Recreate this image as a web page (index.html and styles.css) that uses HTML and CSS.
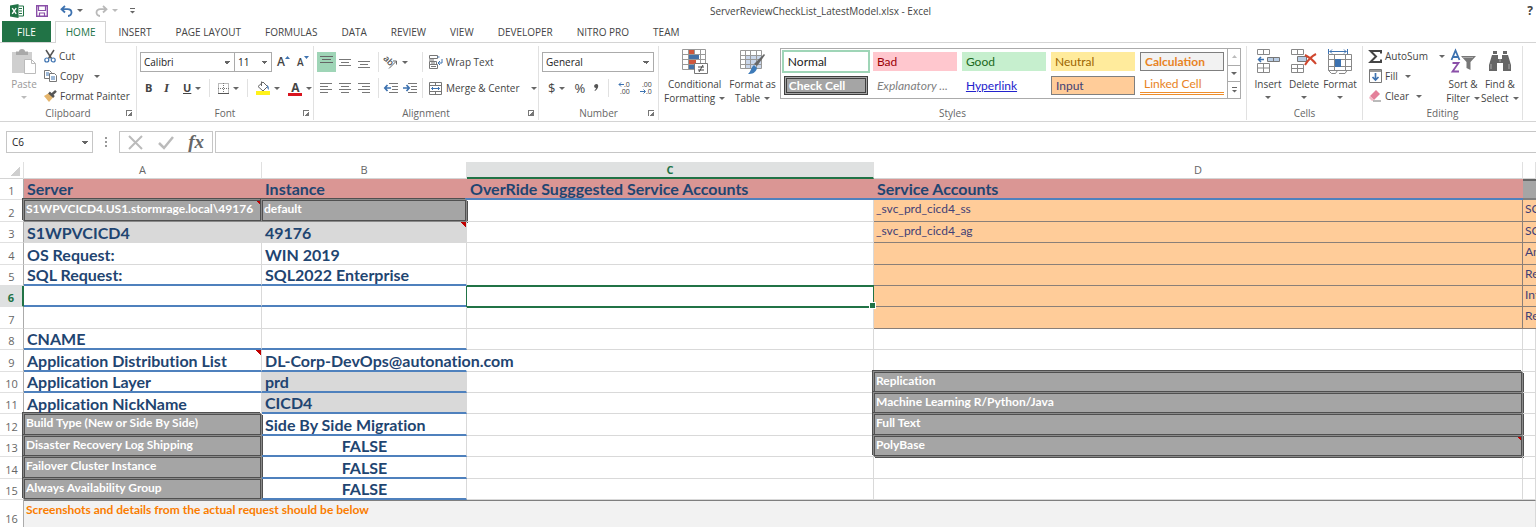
FILE: index.html
```html
<!DOCTYPE html>
<html lang="en">
<head>
  <meta charset="UTF-8">
  <meta name="viewport" content="width=device-width, initial-scale=1.0">
  <title>ServerReviewCheckList_LatestModel.xlsx - Excel</title>
  <link rel="stylesheet" href="styles.css">
</head>
<body>

  <header class="titlebar">
    <div class="quick">
      <svg width="14" height="14" viewBox="0 0 14 14"><path d="M7 2h6.500v10H7z" fill="#fff" stroke="#217346"/><path d="M9 4.500h3M9 7h3M9 9.500h3" stroke="#217346"/><path d="M0 1.500L8.500 0v14L0 12.500z" fill="#217346"/><path d="M2.200 4.200l4 5.600M6.200 4.200l-4 5.600" stroke="#fff" stroke-width="1.400"/></svg>
      <button aria-label="Save"><svg width="12" height="12" viewBox="0 0 12 12"><path d="M.7.700h10.600v10.600H.7z" fill="#fff" stroke="#8a4fa8" stroke-width="1.400"/><path d="M2.500 1v4.500h7V1M3.500 11V8h5v3" fill="none" stroke="#8a4fa8" stroke-width="1.200"/></svg></button>
      <button aria-label="Undo"><svg width="13" height="12" viewBox="0 0 13 12"><path d="M5 1L1.500 4.200 5 7.500M2 4.200h5.500c5.500 0 5 6.800.5 6.800" fill="none" stroke="#3d72b0" stroke-width="1.800"/></svg><i class="caret"></i></button>
      <button aria-label="Redo"><svg width="13" height="12" viewBox="0 0 13 12"><path d="M8 1l3.500 3.200L8 7.500M11 4.200H5.500C0 4.200.5 11 5 11" fill="none" stroke="#b9b9b9" stroke-width="1.800"/></svg><i class="caret pale"></i></button>
      <button aria-label="Customize toolbar"><svg width="5" height="6" viewBox="0 0 5 6"><path d="M0 .5h5" stroke="#666"/><path d="M0 3h5L2.500 5.500z" fill="#666"/></svg></button>
    </div>
    <h1 class="doc-title">ServerReviewCheckList_LatestModel.xlsx - Excel</h1>
    <button class="help" aria-label="Help">?</button>
  </header>

  <nav class="tabs">
    <a class="file" href="#file">FILE</a>
    <a class="active" href="#home">HOME</a>
    <a href="#insert">INSERT</a>
    <a href="#page-layout">PAGE LAYOUT</a>
    <a href="#formulas">FORMULAS</a>
    <a href="#data">DATA</a>
    <a href="#review">REVIEW</a>
    <a href="#view">VIEW</a>
    <a href="#developer">DEVELOPER</a>
    <a href="#nitro">NITRO PRO</a>
    <a href="#team">TEAM</a>
  </nav>

  <div class="ribbon">
    <section class="group clipboard">
      <div class="tools">
        <button class="big disabled">
          <svg width="26" height="26" viewBox="0 0 26 26"><path d="M1 3h20v21H1z" fill="#cfcfcf"/><path d="M5 2.500h3a3 2.500 0 0 1 6 0h3V6H5z" fill="#a9a9a9"/><path d="M13.500 10.500h7l4 4v10h-11z" fill="#fff" stroke="#bbb"/><path d="M20.500 10.500v4h4" fill="none" stroke="#bbb"/></svg>
          <span>Paste</span><i class="caret pale"></i>
        </button>
        <div class="stack">
          <button><svg width="12" height="13" viewBox="0 0 12 13"><path d="M2 0l5.500 8.500M10 0L4.500 8.500" stroke="#555" stroke-width="1.500"/><circle cx="2.800" cy="10" r="2" fill="none" stroke="#3d72b0" stroke-width="1.200"/><circle cx="9.200" cy="10" r="2" fill="none" stroke="#3d72b0" stroke-width="1.200"/></svg>Cut</button>
          <button><svg width="13" height="12" viewBox="0 0 13 12"><path d="M.5.500h5l2 2v6h-7z" fill="#fff" stroke="#777"/><path d="M5.500 3.500h5l2 2v6h-7z" fill="#fff" stroke="#777"/><path d="M2 3h3M2 5h3M7 7h4M7 9h4" stroke="#3d72b0"/></svg>Copy<i class="caret far"></i></button>
          <button><svg width="13" height="12" viewBox="0 0 13 12"><path d="M0 6l5-3 4 4.500L5 12z" fill="#e5b56c"/><path d="M5 2.500L10 7" stroke="#555" stroke-width="2.500"/><path d="M8 4.500L12 .8" stroke="#555" stroke-width="2.500"/></svg>Format Painter</button>
        </div>
      </div>
      <footer>Clipboard<button class="launch" aria-label="Clipboard options"></button></footer>
    </section>

    <section class="group font">
      <div class="tools rows">
        <div class="line">
          <div class="combo">
            <select class="box face" aria-label="Font"><option>Calibri</option></select>
            <select class="box size" aria-label="Font size"><option>11</option></select>
          </div>
          <button class="letter" aria-label="Increase font size">A<svg width="5" height="12" viewBox="0 0 5 12"><path d="M0 3h5L2.500 0z" fill="#3d72b0"/></svg></button>
          <button class="letter small" aria-label="Decrease font size">A<svg width="5" height="12" viewBox="0 0 5 12"><path d="M0 0h5L2.500 3z" fill="#3d72b0"/></svg></button>
        </div>
        <div class="line marks">
          <button class="b">B</button>
          <button class="i">I</button>
          <button class="u"><u>U</u><i class="caret"></i></button>
          <span class="rule"></span>
          <button aria-label="Borders"><svg width="11" height="11" viewBox="0 0 11 11"><path d="M.5.500h10v10H.5zM5.500 0v11M0 5.500h11" fill="none" stroke="#777" stroke-dasharray="1 1"/><path d="M0 10.500h11" stroke="#555"/></svg><i class="caret"></i></button>
          <span class="rule"></span>
          <button aria-label="Fill color"><svg width="14" height="14" viewBox="0 0 14 14"><path d="M2 5.500L7 1l4.500 4.500L7 10z" fill="#fff" stroke="#666"/><path d="M5.500 5V.5" stroke="#666"/><path d="M11 4c2 1 2 3 1.500 5-1-1-1.500-3-1.500-5z" fill="#3d72b0"/><path d="M0 10h14v4H0z" fill="#fff21a"/></svg><i class="caret"></i></button>
          <button aria-label="Font color" class="color"><span>A</span><i class="caret"></i></button>
        </div>
      </div>
      <footer>Font<button class="launch" aria-label="Font options"></button></footer>
    </section>

    <section class="group align">
      <div class="tools">
        <div class="rows aligns">
          <div class="line">
            <button class="on" aria-label="Top align"><svg width="13" height="12" viewBox="0 0 13 12"><path d="M0 .5h13M2 3.500h9M0 6.500h13" stroke="#666"/></svg></button>
            <button aria-label="Middle align"><svg width="13" height="12" viewBox="0 0 13 12"><path d="M0 3.500h12M2 6.500h8M0 9.500h12" stroke="#777"/></svg></button>
            <button aria-label="Bottom align"><svg width="13" height="12" viewBox="0 0 13 12"><path d="M0 5.500h12M2 8.500h8M0 11.500h12" stroke="#777"/></svg></button>
          </div>
          <div class="line">
            <button aria-label="Align left"><svg width="13" height="12" viewBox="0 0 13 12"><path d="M0 1.500h12M0 4.500h8M0 7.500h12M0 10.500h8" stroke="#777"/></svg></button>
            <button aria-label="Center"><svg width="13" height="12" viewBox="0 0 13 12"><path d="M0 1.500h12M2 4.500h8M0 7.500h12M2 10.500h8" stroke="#777"/></svg></button>
            <button aria-label="Align right"><svg width="13" height="12" viewBox="0 0 13 12"><path d="M0 1.500h12M4 4.500h8M0 7.500h12M4 10.500h8" stroke="#777"/></svg></button>
          </div>
        </div>
        <div class="rows indents">
          <div class="line">
            <button aria-label="Orientation"><svg width="14" height="13" viewBox="0 0 14 13"><g transform="rotate(45 5 5)"><text x="-1" y="8" font-size="9" font-weight="600" fill="#555">ab</text></g><path d="M5 12.500L12 5.500M9 5h3.500v3.500" fill="none" stroke="#666"/></svg><i class="caret"></i></button>
          </div>
          <div class="line">
            <button aria-label="Decrease indent"><svg width="14" height="11" viewBox="0 0 14 11"><path d="M5 .5h9M8 3.500h6M8 6.500h6M5 9.500h9" stroke="#777"/><path d="M7 5H1M3.500 2L.8 5l2.700 3" fill="none" stroke="#3d72b0" stroke-width="1.700"/></svg></button>
            <button aria-label="Increase indent"><svg width="14" height="11" viewBox="0 0 14 11"><path d="M5 .5h9M8 3.500h6M8 6.500h6M5 9.500h9" stroke="#777"/><path d="M0 5h6M3.500 2l2.700 3-2.700 3" fill="none" stroke="#3d72b0" stroke-width="1.700"/></svg></button>
          </div>
        </div>
        <div class="rows merges">
          <div class="line"><button><svg width="14" height="14" viewBox="0 0 14 14"><path d="M.5.500h8v3h-8zM.5 6.500h7v3h-7zM.5 9.500h8v4h-8zM0 5h5M2 8h4M2 11.500h5" fill="none" stroke="#777"/><path d="M8.500 2h2M13 4v4H9M11 6L9 8l2 2" fill="none" stroke="#3d72b0"/></svg>Wrap Text</button></div>
          <div class="line"><button><svg width="14" height="13" viewBox="0 0 14 13"><path d="M.5.500h12v12H.5zM.5 3.500h12M.5 9.500h12M6.500 0v3.500M6.500 9.500v3" fill="none" stroke="#777"/><path d="M2.500 6.500h8M4 5L2.500 6.500 4 8M9 5l1.500 1.500L9 8" fill="none" stroke="#3d72b0"/></svg>Merge &amp; Center<i class="caret far"></i></button></div>
        </div>
      </div>
      <footer>Alignment<button class="launch" aria-label="Alignment options"></button></footer>
    </section>

    <section class="group number">
      <div class="tools rows">
        <div class="line"><select class="box format" aria-label="Number format"><option>General</option></select></div>
        <div class="line signs">
          <button class="sign">$<i class="caret"></i></button>
          <button class="sign">%</button>
          <button class="sign" aria-label="Comma style"><svg width="5" height="8" viewBox="0 0 5 8"><path d="M2.500 0C5 0 5 4.500 1 7L.5 6.300C2 5 2 4 2 4-.5 4-.5 0 2.500 0z" fill="#555"/></svg></button>
          <span class="rule"></span>
          <button aria-label="Increase decimal"><svg width="13" height="12" viewBox="0 0 13 12"><text x="6" y="5" font-size="7" fill="#444">.0</text><text x="2" y="12" font-size="7" fill="#444">.00</text><path d="M6 2.500H1M3 .5L1 2.500l2 2" fill="none" stroke="#3d72b0"/></svg></button>
          <button aria-label="Decrease decimal"><svg width="13" height="12" viewBox="0 0 13 12"><text x="2" y="5" font-size="7" fill="#444">.00</text><text x="6" y="12" font-size="7" fill="#444">.0</text><path d="M0 9.500h5M3.500 7.500l2 2-2 2" fill="none" stroke="#3d72b0"/></svg></button>
        </div>
      </div>
      <footer>Number<button class="launch" aria-label="Number options"></button></footer>
    </section>

    <section class="group styles">
      <div class="tools">
        <button class="big">
          <svg width="26" height="26" viewBox="0 0 26 26"><path d="M.5.500h23v20H.5zM6.500 0v20M12.500 0v20M18.500 0v20M0 5.500h23M0 10.500h23M0 15.500h23" fill="none" stroke="#999"/><path d="M7 1h5v4H7zM7 11h7v4H7z" fill="#d0573c"/><path d="M7 6h10v4H7zM7 16h5v4H7z" fill="#4472a8"/><path d="M12.500 14.500h13v10h-13z" fill="#fff" stroke="#777"/><path d="M16 18h6M16 21h6M21 16l-4 7" stroke="#444"/></svg>
          <span>Conditional</span><span>Formatting<i class="caret"></i></span>
        </button>
        <button class="big">
          <svg width="26" height="26" viewBox="0 0 26 26"><path d="M6 6h15v13H6z" fill="#c9d6ea"/><path d="M.5 1.500h21v18H.5zM5.500 1v18M10.500 1v18M16.500 1v18M0 6.500h21M0 10.500h21M0 15.500h21" fill="none" stroke="#999"/><path d="M25 6l-8 11-3-2L24 5z" fill="#666"/><path d="M14 16l3 3c-1 5-5 6-9 6 3-2 3-7 6-9z" fill="#3d7ab8"/></svg>
          <span>Format as</span><span>Table<i class="caret"></i></span>
        </button>
        <div class="gallery">
          <div class="swatches">
            <button class="sw normal">Normal</button>
            <button class="sw bad">Bad</button>
            <button class="sw good">Good</button>
            <button class="sw neutral">Neutral</button>
            <button class="sw calc">Calculation</button>
            <button class="sw checked">Check Cell</button>
            <button class="sw expl">Explanatory ...</button>
            <button class="sw hyper">Hyperlink</button>
            <button class="sw input">Input</button>
            <button class="sw linked">Linked Cell</button>
          </div>
          <div class="scroll">
            <button aria-label="Previous styles"><svg width="5" height="3" viewBox="0 0 5 3"><path d="M0 3h5L2.500 0z" fill="#bbb"/></svg></button>
            <button aria-label="Next styles"><i class="caret"></i></button>
            <button aria-label="More styles"><svg width="5" height="6" viewBox="0 0 5 6"><path d="M0 .5h5" stroke="#666"/><path d="M0 3h5L2.500 5.500z" fill="#666"/></svg></button>
          </div>
        </div>
      </div>
      <footer>Styles</footer>
    </section>

    <section class="group cells">
      <div class="tools">
        <button class="big">
          <svg width="24" height="26" viewBox="0 0 24 26"><path d="M1.500.500h12v5h-12zM7.500.500v5M1.500 14.500h12v9h-12zM7.500 14.500v9M1.500 19h12" fill="none" stroke="#888"/><path d="M11.500 8.500h12v4h-12zM17.500 8.500v4" fill="#b8cce4" stroke="#777"/><path d="M8 10.500H2.500M5 8l-2.500 2.500L5 13" fill="none" stroke="#3d72b0" stroke-width="1.500"/></svg>
          <span>Insert</span><i class="caret"></i>
        </button>
        <button class="big">
          <svg width="26" height="26" viewBox="0 0 26 26"><path d="M.5.500h12v5H.5zM6.500.500v5M.5 15.500h12v8H.5zM6.500 15.500v8M.5 19.500h12" fill="none" stroke="#888"/><path d="M6.500 7.500h9v5h-9z" fill="#b8cce4" stroke="#777"/><path d="M14 6c4 2 8 5 11 9M25 5c-4 2-8 6-11 11" fill="none" stroke="#d0472f" stroke-width="2"/></svg>
          <span>Delete</span><i class="caret"></i>
        </button>
        <button class="big">
          <svg width="26" height="26" viewBox="0 0 26 26"><path d="M1.500 5.500h23v16h-23zM7.500 5.500v16M18.500 5.500v16M1.500 10.500h23M1.500 17.500h23M1.500 21.500l3 3h4l2-3M12 24.500h6l2-3" fill="none" stroke="#888"/><path d="M8 10h6v8H8z" fill="#3d72b0"/><path d="M1.500 0v5M20.500 0v5M2.500 2.500h17M5 .5L3 2.500l2 2M17 .5l2 2-2 2" fill="none" stroke="#3d72b0"/></svg>
          <span>Format</span><i class="caret"></i>
        </button>
      </div>
      <footer>Cells</footer>
    </section>

    <section class="group editing">
      <div class="tools">
        <div class="stack">
          <button><svg width="13" height="13" viewBox="0 0 13 13"><path d="M12 3.500V1H1.500L7 6.500 1.500 12H12V9.500" fill="none" stroke="#444" stroke-width="2"/></svg>AutoSum<i class="caret far"></i></button>
          <button><svg width="13" height="14" viewBox="0 0 13 14"><path d="M.5.500h12v13H.5z" fill="#fff" stroke="#777"/><path d="M1 1h11v2H1z" fill="#999"/><path d="M6.500 4v7M3.500 8l3 3 3-3" fill="none" stroke="#3d72b0" stroke-width="1.700"/></svg>Fill<i class="caret"></i></button>
          <button><svg width="13" height="12" viewBox="0 0 13 12"><path d="M7 0l4 4-6 6-4-4z" fill="#e4809a"/><path d="M1 6l4 4-2 1-3-3z" fill="#f3b9c6"/><path d="M4 11h8" stroke="#777"/></svg>Clear<i class="caret"></i></button>
        </div>
        <button class="big">
          <svg width="26" height="26" viewBox="0 0 26 26"><path d="M1.500 11L5.500 1.500 9.500 11M3 8h5" fill="none" stroke="#3d72b0" stroke-width="1.800"/><path d="M2.500 14h6l-6 8.500h6.500" fill="none" stroke="#8a4fa8" stroke-width="1.800"/><path d="M11 7h15l-5.500 6v8l-4-2v-6z" fill="#777"/><path d="M13 8.500h10" stroke="#aaa"/></svg>
          <span>Sort &amp;</span><span>Filter<i class="caret"></i></span>
        </button>
        <button class="big">
          <svg width="24" height="26" viewBox="0 0 24 26"><path d="M4 6h6v4h4V6h6l3 10v6h-8v-8H9v8H1v-6z" fill="#666"/><path d="M5 2h4v3H5zM15 2h4v3h-4z" fill="#666"/><path d="M3 15v5M21 15v5M12 10v3" stroke="#aaa"/></svg>
          <span>Find &amp;</span><span>Select<i class="caret"></i></span>
        </button>
      </div>
      <footer>Editing</footer>
    </section>
  </div>

  <div class="formula-bar">
    <select class="box name" aria-label="Name box"><option>C6</option></select>
    <svg class="dots" width="2" height="10" viewBox="0 0 2 10"><path d="M1 0v10" stroke="#999" stroke-width="2" stroke-dasharray="2 2"/></svg>
    <div class="entry">
      <button aria-label="Cancel"><svg width="15" height="13" viewBox="0 0 15 13"><path d="M1 0l13 13M14 0L1 13" stroke="#bbb" stroke-width="2"/></svg></button>
      <button aria-label="Enter"><svg width="16" height="13" viewBox="0 0 16 13"><path d="M1 7l5 5L15 1" fill="none" stroke="#bbb" stroke-width="2.500"/></svg></button>
      <button class="fx">fx</button>
    </div>
    <input class="formula" type="text" aria-label="Formula">
  </div>

  <table class="sheet">
    <colgroup><col class="c-num"><col class="c-a"><col class="c-b"><col class="c-c"><col><col class="c-e"></colgroup>
    <thead>
      <tr><th class="corner"></th><th>A</th><th>B</th><th class="sel">C</th><th>D</th><th></th></tr>
    </thead>
    <tbody>
      <tr class="titles"><th>1</th><td>Server</td><td>Instance</td><td>OverRide Sugggested Service Accounts</td><td>Service Accounts</td><td class="end"></td></tr>
      <tr><th>2</th><td class="check note">S1WPVCICD4.US1.stormrage.local\49176</td><td class="check">default</td><td></td><td class="in">_svc_prd_cicd4_ss</td><td class="in">SQL</td></tr>
      <tr><th>3</th><td class="head gray">S1WPVCICD4</td><td class="head gray note">49176</td><td></td><td class="in">_svc_prd_cicd4_ag</td><td class="in">SQL</td></tr>
      <tr><th>4</th><td class="head">OS Request:</td><td class="head">WIN 2019</td><td></td><td class="in"></td><td class="in">Analysis</td></tr>
      <tr><th>5</th><td class="head line-b">SQL Request:</td><td class="head line-b">SQL2022 Enterprise</td><td></td><td class="in"></td><td class="in">Reporting</td></tr>
      <tr><th class="sel">6</th><td class="line-b"></td><td class="line-b"></td><td class="active-cell"></td><td class="in"></td><td class="in">Integration</td></tr>
      <tr><th>7</th><td></td><td></td><td></td><td class="in"></td><td class="in">Report</td></tr>
      <tr><th>8</th><td class="head line-b">CNAME</td><td class="line-b"></td><td></td><td></td><td></td></tr>
      <tr><th>9</th><td class="head line-b note">Application Distribution List</td><td class="head line-b spill">DL-Corp-DevOps@autonation.com</td><td></td><td></td><td></td></tr>
      <tr><th>10</th><td class="head line-b">Application Layer</td><td class="head line-b gray">prd</td><td></td><td class="check">Replication</td><td></td></tr>
      <tr><th>11</th><td class="head">Application NickName</td><td class="head line-b gray">CICD4</td><td></td><td class="check">Machine Learning R/Python/Java</td><td></td></tr>
      <tr><th>12</th><td class="check">Build Type (New or Side By Side)</td><td class="head line-b">Side By Side Migration</td><td></td><td class="check">Full Text</td><td></td></tr>
      <tr><th>13</th><td class="check">Disaster Recovery Log Shipping</td><td class="head line-b mid">FALSE</td><td></td><td class="check note">PolyBase</td><td></td></tr>
      <tr><th>14</th><td class="check">Failover Cluster Instance</td><td class="head line-b mid">FALSE</td><td></td><td></td><td></td></tr>
      <tr><th>15</th><td class="check">Always Availability Group</td><td class="head line-b mid">FALSE</td><td></td><td></td><td></td></tr>
      <tr class="last"><th>16</th><td class="shots" colspan="5">Screenshots and details from the actual request should be below</td></tr>
    </tbody>
  </table>

</body>
</html>
```
FILE: styles.css
```css
* {
  box-sizing: border-box;
}

body {
  margin: 0;
  background: #fff;
  color: #444;
  font-family: "Open Sans", "Noto Sans", sans-serif;
  font-size: 10px;
  line-height: 14px;
  overflow: hidden;
}

button, select, input {
  margin: 0;
  padding: 0;
  border: 0;
  background: none;
  color: inherit;
  font: inherit;
}

button {
  display: flex;
  align-items: center;
  white-space: nowrap;
}

svg {
  display: block;
  flex: none;
  overflow: visible;
}

.caret {
  flex: none;
  margin-left: 4px;
  border: 3px solid transparent;
  border-top-color: #666;
  border-bottom: 0;
}

.caret.pale {
  border-top-color: #bbb;
}

.caret.far {
  margin-left: 8px;
}

/* title bar */
.titlebar {
  display: grid;
  grid-template-columns: 1fr auto 1fr;
  align-items: center;
  height: 21px;
  padding: 0 3px 0 10px;
}

.quick {
  display: flex;
  align-items: center;
  gap: 12px;
}

.doc-title {
  margin: 0;
  padding-left: 98px;
  font-size: 10px;
  font-weight: normal;
}

.help {
  justify-self: end;
  font-size: 12px;
  font-weight: bold;
}

/* tabs */
.tabs {
  display: flex;
  height: 22px;
  padding-left: 2px;
  border-bottom: 1px solid #d4d4d4;
}

.tabs a {
  padding: 0 12px;
  color: #444;
  line-height: 22px;
  text-decoration: none;
}

.tabs .file {
  margin-right: 4px;
  padding: 0 15px;
  background: #217346;
  color: #fff;
}

.tabs .active {
  height: 22px;
  padding: 0 10px;
  border: 1px solid #d4d4d4;
  border-bottom: 0;
  background: #fff;
  color: #217346;
  line-height: 20px;
}

/* ribbon */
.ribbon {
  display: flex;
  height: 79px;
  padding-top: 3px;
  border-bottom: 1px solid #d4d4d4;
}

.group {
  display: flex;
  flex-direction: column;
  margin-bottom: 1px;
  border-right: 1px solid #e1e1e1;
}

.group footer {
  position: relative;
  color: #666;
  text-align: center;
}

.launch {
  position: absolute;
  right: 4px;
  bottom: 4px;
  width: 6px;
  height: 6px;
  border-top: 1px solid #777;
  border-left: 1px solid #777;
  background: linear-gradient(135deg, transparent 50%, #777 50%);
}

.tools {
  display: flex;
  flex: 1;
  align-items: flex-start;
}

.rows {
  display: flex;
  flex-direction: column;
  gap: 6px;
  padding-top: 6px;
}

.line {
  display: flex;
  align-items: center;
  height: 20px;
}

.stack {
  display: flex;
  flex-direction: column;
}

.stack button {
  height: 20px;
  gap: 3px;
}

.big {
  flex-direction: column;
  min-width: 36px;
  padding-top: 3px;
}

.big svg {
  margin-bottom: 2px;
}

.big span {
  display: flex;
  align-items: center;
}

.big > .caret {
  margin: 5px 0 0;
}

.disabled {
  color: #999;
}

.rule {
  width: 1px;
  height: 18px;
  background: #e1e1e1;
}

.box {
  height: 20px;
  padding: 0 3px;
  border: 1px solid #ababab;
  border-radius: 0;
  appearance: none;
  background: linear-gradient(45deg, transparent 50%, #666 50%) right 7px center / 3px 3px no-repeat,
    linear-gradient(-45deg, transparent 50%, #666 50%) right 4px center / 3px 3px no-repeat;
  color: #222;
}

.clipboard {
  width: 137px;
}

.clipboard .tools {
  gap: 2px;
  padding-left: 6px;
}

.font {
  width: 177px;
}

.font .tools,
.number .tools {
  padding-left: 3px;
}

.combo {
  display: flex;
  margin-right: 5px;
}

.face {
  width: 95px;
}

.size {
  width: 37px;
  border-left: 0;
}

.letter {
  width: 20px;
  font-size: 12px;
  font-weight: 600;
}

.letter.small {
  font-size: 10px;
}

.marks {
  gap: 8px;
  padding-left: 5px;
}

.marks button {
  min-width: 11px;
}

.b,
.u {
  font-size: 11px;
  font-weight: bold;
}

.i {
  font-family: "Liberation Serif", serif;
  font-size: 13px;
  font-style: italic;
  font-weight: bold;
}

.color span {
  width: 14px;
  height: 15px;
  border-bottom: 3px solid #d9141e;
  font-size: 12px;
  font-weight: bold;
  line-height: 13px;
}

.align {
  width: 225px;
}

.align .tools {
  padding-left: 3px;
}

.aligns button {
  justify-content: center;
  width: 19px;
  height: 20px;
}

.aligns .on {
  background: #9fd5b7;
}

.indents {
  width: 44px;
  margin-left: 4px;
}

.indents .line {
  gap: 5px;
  padding-left: 5px;
  border-left: 1px solid #e1e1e1;
}

.merges .line {
  padding-left: 6px;
  border-left: 1px solid #e1e1e1;
}

.merges button {
  gap: 3px;
}

.number {
  width: 120px;
}

.format {
  width: 112px;
}

.signs {
  gap: 9px;
  padding-left: 6px;
}

.sign {
  font-size: 13px;
}

.styles {
  flex: 1;
}

.styles .tools {
  gap: 4px;
  padding-left: 5px;
  padding-right: 5px;
}

.gallery {
  display: flex;
  flex: 1;
  height: 51px;
  margin-top: 2px;
  border: 1px solid #ababab;
}

.swatches {
  display: grid;
  flex: 1;
  grid-template-columns: repeat(5, 1fr);
  gap: 5px;
  padding: 3px;
}

.sw {
  height: 19px;
  padding-left: 4px;
  font-family: Lato, sans-serif;
  font-size: 12px;
}

.normal {
  color: #222;
  outline: 2px solid #9fd5b7;
}

.bad { background: #ffc7ce; color: #9c0006; }
.good { background: #c6efce; color: #206a20; }
.neutral { background: #ffeb9c; color: #9c6500; }

.calc {
  border: 1px solid #7f7f7f;
  background: #f2f2f2;
  color: #e88324;
  font-weight: bold;
}

.checked {
  padding-left: 2px;
  border: 3px double #3f3f3f;
  background: #a5a5a5;
  color: #fff;
  font-weight: bold;
}

.expl {
  color: #7f7f7f;
  font-style: italic;
}

.hyper {
  color: #2222cc;
  text-decoration: underline;
}

.input {
  border: 1px solid #7f7f7f;
  background: #ffcc99;
  color: #3f3f76;
}

.linked {
  border-bottom: 3px double #ee8d2b;
  color: #e88324;
}

.scroll {
  display: flex;
  flex-direction: column;
  width: 13px;
  border-left: 1px solid #ababab;
}

.scroll button {
  flex: 1;
  justify-content: center;
}

.scroll button + button {
  border-top: 1px solid #ababab;
}

.scroll .caret {
  margin: 0;
}

.cells {
  width: 116px;
}

.cells .tools {
  padding-left: 3px;
}

.editing {
  width: 160px;
  margin-right: 13px;
}

.editing .tools {
  padding-left: 6px;
}

.editing .stack {
  width: 76px;
}

/* formula bar */
.formula-bar {
  display: flex;
  align-items: center;
  height: 40px;
  padding-left: 6px;
}

.name {
  width: 87px;
  height: 22px;
  padding-left: 5px;
  border-color: #c6c6c6;
}

.dots {
  margin: 0 12px;
}

.entry {
  display: flex;
  align-items: center;
  justify-content: space-between;
  width: 94px;
  height: 22px;
  margin-right: 2px;
  padding: 0 8px;
  border: 1px solid #c6c6c6;
}

.fx {
  color: #666;
  font-family: "Liberation Serif", serif;
  font-size: 19px;
  font-style: italic;
  font-weight: bold;
}

.formula {
  flex: 1;
  height: 22px;
  border: 1px solid #c6c6c6;
  border-right: 0;
}

/* sheet */
.sheet {
  width: 100%;
  border-spacing: 0;
  table-layout: fixed;
  font-family: Lato, sans-serif;
  font-size: 12px;
  font-variant-ligatures: none;
}

.c-num { width: 24px; }
.c-a { width: 238px; }
.c-b { width: 205px; }
.c-c { width: 407px; }
.c-e { width: 13px; }

.sheet th {
  height: 17px;
  padding: 0;
  border-right: 1px solid #e0e0e0;
  color: #666;
  font-family: "Open Sans", "Noto Sans", sans-serif;
  font-size: 11px;
  font-weight: normal;
}

.sheet thead th {
  border-bottom: 1px solid #d4d4d4;
  line-height: 14px;
}

.sheet .corner {
  background: linear-gradient(135deg, transparent 50%, #cfcfcf 50%) right 3px bottom 2px / 10px 10px no-repeat;
}

.sheet tbody th {
  border-right-color: #ababab;
  border-bottom: 1px solid #e0e0e0;
  line-height: 16px;
  vertical-align: bottom;
}

.sheet .sel {
  background: #dfe1e1;
  color: #217346;
  font-weight: bold;
}

.sheet thead .sel {
  border-bottom: 2px solid #217346;
}

.sheet tbody .sel {
  border-right: 2px solid #217346;
}

.sheet tbody tr {
  height: 21px;
}

.sheet tbody tr:nth-child(5n+2),
.sheet tbody tr:nth-child(5n+4) {
  height: 22px;
}

.sheet tbody .last {
  height: 28px;
}

.sheet td {
  padding: 0 2px;
  border-right: 1px solid #d9d9d9;
  border-bottom: 1px solid #d9d9d9;
  line-height: 17px;
  vertical-align: top;
  white-space: nowrap;
}

.sheet .titles td,
.sheet .head {
  padding-left: 3px;
  color: #1f4571;
  font-size: 16px;
  font-weight: bold;
  line-height: 19px;
  vertical-align: bottom;
}

.sheet .titles td {
  border-right: 0;
  border-bottom: 2px solid #4f81bd;
  background: #da9694;
}

.sheet .titles .end {
  border-top: 2px solid #666;
  border-bottom-color: #7f7f7f;
  background: #a5a5a5;
}

.sheet .line-b {
  border-bottom: 2px solid #4f81bd;
}

.sheet .gray {
  background-color: #d9d9d9;
}

.sheet .mid {
  text-align: center;
}

.sheet .spill {
  border-right-color: transparent;
}

/* neighbouring check cells share one double border */
.sheet .check {
  border-color: #8a8a8a;
  background-color: #a5a5a5;
  box-shadow: inset 0 0 0 1px #505050, 1px 1px 0 #505050, -1px -1px 0 #8a8a8a, -2px -2px 0 #505050;
  color: #fff;
  font-weight: bold;
}

.sheet .in {
  overflow: hidden;
  border-color: #8a7f78;
  background: #ffcc99;
  color: #3f3f76;
}

.sheet .in:last-child {
  border-right: 0;
}

.sheet .note {
  background-image: linear-gradient(225deg, #c00000 4px, transparent 4px);
}

.sheet .active-cell {
  position: relative;
  border-color: #217346;
  box-shadow: inset 0 1px 0 #217346, 0 -1px 0 #217346, -1px 0 0 #217346, 0 1px 0 #217346;
}

.active-cell::after {
  content: "";
  position: absolute;
  right: -3px;
  bottom: -3px;
  width: 5px;
  height: 5px;
  border: 1px solid #fff;
  background: #217346;
}

.sheet .shots {
  border-top: 1px solid #7f7f7f;
  border-bottom: 1px solid #7f7f7f;
  background: #f2f2f2;
  color: #fa7d00;
  font-weight: bold;
}
```
